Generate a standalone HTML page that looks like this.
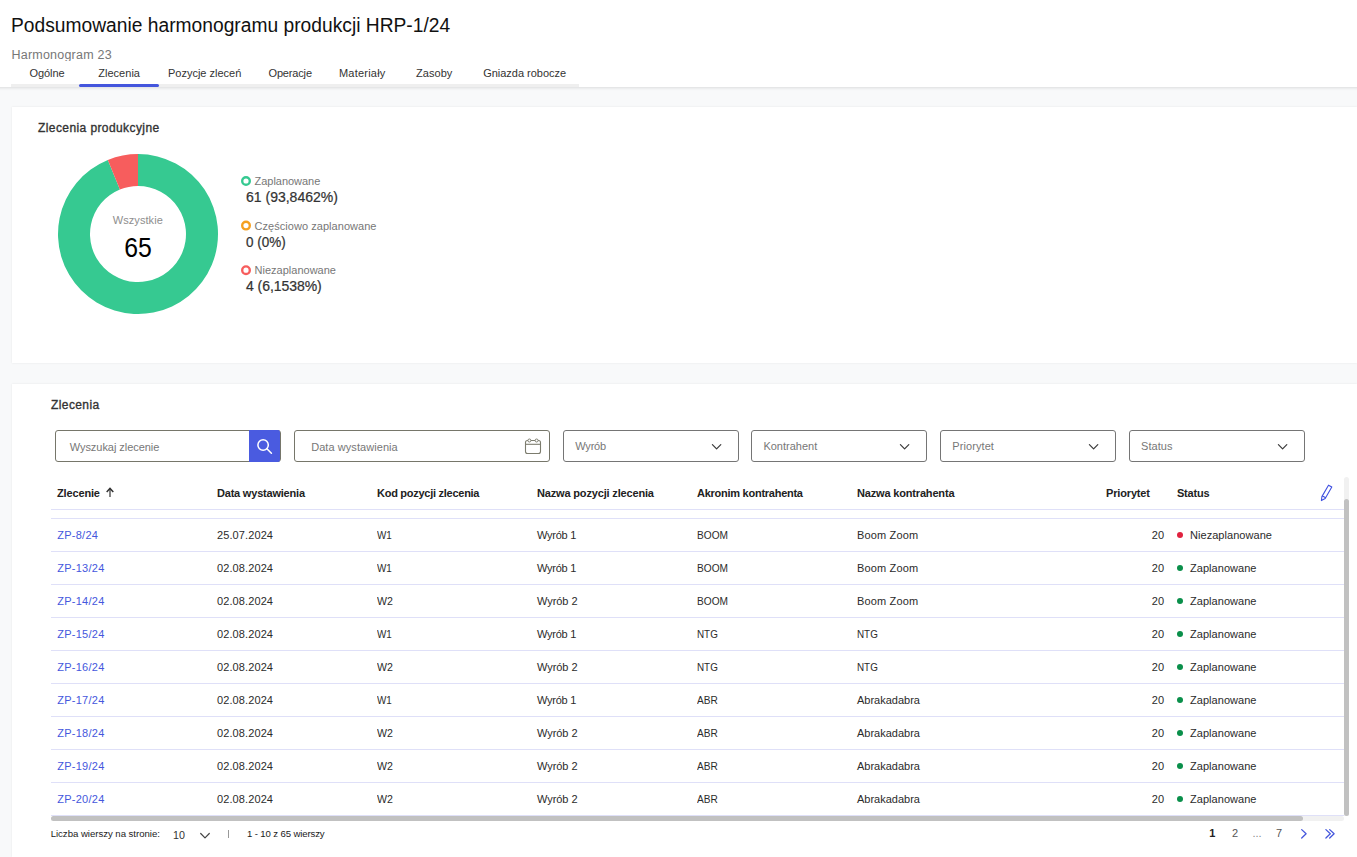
<!DOCTYPE html>
<html lang="pl"><head><meta charset="utf-8"><title>Podsumowanie harmonogramu produkcji HRP-1/24</title>
<style>
html,body{margin:0;padding:0}
body{width:1357px;height:857px;overflow:hidden;position:relative;background:#f8f9fa;font-family:"Liberation Sans",sans-serif;color:#222}
.t{position:absolute;white-space:nowrap;line-height:1;margin:0;padding:0}
.abs{position:absolute}
.hdr{left:-10px;top:0;width:1377px;height:87px;background:#fff;box-shadow:0 1px 3px rgba(0,0,0,.12)}
.card{background:#fff;box-shadow:0 0 2px rgba(0,0,0,.08)}
.inp{border:1px solid #76766a;border-radius:3px;background:#fff;box-sizing:border-box;height:32px;top:430px}
.sel{border-color:#757575}
.hl{left:51px;width:1293px;height:1px;background:#dfe0f8}
</style></head><body>
<div class="abs hdr"></div>
<div class="abs" style="left:0;top:44px;width:200px;height:17px;overflow:hidden"><span class="t" id="sub" style="left:11.5px;top:5px;font-size:12.5px;color:#777;letter-spacing:0.22px">Harmonogram 23</span></div>
<div class="abs" style="left:11px;top:84px;width:568px;height:3px;background:#efefef"></div>
<div class="abs" style="left:79px;top:84px;width:80px;height:3px;background:#4456dd;border-radius:2px"></div>
<div class="abs card" style="left:12px;top:107px;width:1345px;height:256px"></div>
<div class="abs card" style="left:12px;top:384px;width:1345px;height:473px"></div>
<svg class="abs" style="left:0;top:0" width="420" height="370" viewBox="0 0 420 370"><path d="M138.00 154.00A80 80 0 1 1 107.83 159.91L119.90 189.54A48 48 0 1 0 138.00 186.00Z" fill="#36c991"/><path d="M107.83 159.91A80 80 0 0 1 138.00 154.00L138.00 186.00A48 48 0 0 0 119.90 189.54Z" fill="#f75d5d"/><circle cx="246" cy="181" r="3.8" fill="#fff" stroke="#36c991" stroke-width="2.4"/><circle cx="246" cy="225.6" r="3.8" fill="#fff" stroke="#f5a020" stroke-width="2.4"/><circle cx="246" cy="270.2" r="3.8" fill="#fff" stroke="#f75d5d" stroke-width="2.4"/></svg>
<div class="abs inp" style="left:55px;width:226px"></div>
<div class="abs" style="left:249px;top:430px;width:31px;height:32px;background:#4a5be0;border-radius:0 2px 2px 0"></div>
<svg class="abs" style="left:249px;top:430px" width="32" height="32" viewBox="0 0 32 32"><circle cx="14.1" cy="15" r="5.2" fill="none" stroke="#fff" stroke-width="1.5"/><path d="M17.9 18.8L22.4 23.2" stroke="#fff" stroke-width="1.6" stroke-linecap="round"/></svg>
<div class="abs inp" style="left:294px;width:256px"></div>
<div class="abs inp sel" style="left:563px;width:176px"></div>
<svg class="abs" style="left:709.6px;top:441px" width="14" height="12" viewBox="0 0 14 12"><path d="M2.4 3.6L6.6 7.8L10.8 3.6" fill="none" stroke="#3a3a3a" stroke-width="1.2" stroke-linecap="round" stroke-linejoin="round"/></svg>
<div class="abs inp sel" style="left:751px;width:176px"></div>
<svg class="abs" style="left:897.6px;top:441px" width="14" height="12" viewBox="0 0 14 12"><path d="M2.4 3.6L6.6 7.8L10.8 3.6" fill="none" stroke="#3a3a3a" stroke-width="1.2" stroke-linecap="round" stroke-linejoin="round"/></svg>
<div class="abs inp sel" style="left:940px;width:176px"></div>
<svg class="abs" style="left:1086.6px;top:441px" width="14" height="12" viewBox="0 0 14 12"><path d="M2.4 3.6L6.6 7.8L10.8 3.6" fill="none" stroke="#3a3a3a" stroke-width="1.2" stroke-linecap="round" stroke-linejoin="round"/></svg>
<div class="abs inp sel" style="left:1129px;width:176px"></div>
<svg class="abs" style="left:1275.6px;top:441px" width="14" height="12" viewBox="0 0 14 12"><path d="M2.4 3.6L6.6 7.8L10.8 3.6" fill="none" stroke="#3a3a3a" stroke-width="1.2" stroke-linecap="round" stroke-linejoin="round"/></svg>
<svg class="abs" style="left:522.5px;top:436px" width="20" height="20" viewBox="0 0 20 20"><rect x="2.5" y="4.5" width="15" height="13" rx="2" fill="none" stroke="#7c7c6e" stroke-width="1.1"/><path d="M2.5 8.3H17.5" stroke="#7c7c6e" stroke-width="1.1"/><circle cx="6.4" cy="4.5" r="1.5" fill="#fff" stroke="#7c7c6e" stroke-width="1"/><circle cx="13.6" cy="4.5" r="1.5" fill="#fff" stroke="#7c7c6e" stroke-width="1"/></svg>
<svg class="abs" style="left:103.5px;top:486px" width="12" height="12" viewBox="0 0 12 12"><path d="M6 2.4V11" fill="none" stroke="#333" stroke-width="1.2"/><path d="M2.7 5.9L6 2.4L9.3 5.9" fill="none" stroke="#333" stroke-width="1.5"/></svg>
<svg class="abs" style="left:1317px;top:483px" width="18" height="20" viewBox="0 0 18 20"><path d="M11.5 2.2L14.8 4.1L8.2 15.6L4.4 17.6L4.9 13.6Z M5.2 12.8L8.6 14.8" fill="none" stroke="#3f50e0" stroke-width="1.1" stroke-linejoin="round"/></svg>
<div class="abs hl" style="top:509px"></div>
<div class="abs hl" style="top:518px"></div>
<div class="abs hl" style="top:551px"></div>
<div class="abs hl" style="top:584px"></div>
<div class="abs hl" style="top:617px"></div>
<div class="abs hl" style="top:650px"></div>
<div class="abs hl" style="top:683px"></div>
<div class="abs hl" style="top:716px"></div>
<div class="abs hl" style="top:749px"></div>
<div class="abs hl" style="top:782px"></div>
<div class="abs hl" style="top:815px"></div>
<div class="abs" style="left:1176.75px;top:531.75px;width:6.5px;height:6.5px;border-radius:50%;background:#e0223f"></div>
<div class="abs" style="left:1176.75px;top:564.75px;width:6.5px;height:6.5px;border-radius:50%;background:#0a8f4a"></div>
<div class="abs" style="left:1176.75px;top:597.75px;width:6.5px;height:6.5px;border-radius:50%;background:#0a8f4a"></div>
<div class="abs" style="left:1176.75px;top:630.75px;width:6.5px;height:6.5px;border-radius:50%;background:#0a8f4a"></div>
<div class="abs" style="left:1176.75px;top:663.75px;width:6.5px;height:6.5px;border-radius:50%;background:#0a8f4a"></div>
<div class="abs" style="left:1176.75px;top:696.75px;width:6.5px;height:6.5px;border-radius:50%;background:#0a8f4a"></div>
<div class="abs" style="left:1176.75px;top:729.75px;width:6.5px;height:6.5px;border-radius:50%;background:#0a8f4a"></div>
<div class="abs" style="left:1176.75px;top:762.75px;width:6.5px;height:6.5px;border-radius:50%;background:#0a8f4a"></div>
<div class="abs" style="left:1176.75px;top:795.75px;width:6.5px;height:6.5px;border-radius:50%;background:#0a8f4a"></div>
<div class="abs" style="left:1344px;top:477px;width:5px;height:339px;background:#f1f1f1;border-radius:2.5px"></div>
<div class="abs" style="left:1344px;top:499px;width:5px;height:317px;background:#c1c1c1;border-radius:2.5px"></div>
<div class="abs" style="left:51px;top:816px;width:1293px;height:5px;background:#f1f1f1;border-radius:2.5px"></div>
<div class="abs" style="left:51px;top:816px;width:1252px;height:5px;background:#c1c1c1;border-radius:2.5px"></div>
<svg class="abs" style="left:197.6px;top:829.6px" width="14" height="12" viewBox="0 0 14 12"><path d="M2.7 3.5L7 7.8L11.3 3.5" fill="none" stroke="#444" stroke-width="1.2" stroke-linecap="round" stroke-linejoin="round"/></svg>
<div class="abs" style="left:228px;top:830px;width:1px;height:8px;background:#999"></div>
<svg class="abs" style="left:1296px;top:826px" width="44" height="16" viewBox="0 0 44 16"><path d="M5.7 3.6L10.1 7.8L5.7 12M29.9 3.6L34.3 7.8L29.9 12M33.7 3.6L38.1 7.8L33.7 12" fill="none" stroke="#4557dd" stroke-width="1.3" stroke-linecap="round" stroke-linejoin="round"/></svg>
<span class="t" id="t0" style="top:15px;font-size:20px;color:#111;left:11.3px;transform:scaleX(0.9612);transform-origin:0 0;">Podsumowanie harmonogramu produkcji HRP-1/24</span>
<span class="t" id="t1" style="top:68px;font-size:11px;color:#333;letter-spacing:-0.057px;left:29.4px;">Ogólne</span>
<span class="t" id="t2" style="top:68px;font-size:11px;color:#333;letter-spacing:0.032px;left:98.2px;">Zlecenia</span>
<span class="t" id="t3" style="top:68px;font-size:11px;color:#333;letter-spacing:-0.006px;left:168px;">Pozycje zleceń</span>
<span class="t" id="t4" style="top:68px;font-size:11px;color:#333;letter-spacing:-0.163px;left:268.5px;">Operacje</span>
<span class="t" id="t5" style="top:68px;font-size:11px;color:#333;letter-spacing:0.209px;left:339px;">Materiały</span>
<span class="t" id="t6" style="top:68px;font-size:11px;color:#333;letter-spacing:0.044px;left:416px;">Zasoby</span>
<span class="t" id="t7" style="top:68px;font-size:11px;color:#333;letter-spacing:-0.019px;left:483.2px;">Gniazda robocze</span>
<span class="t" id="t8" style="top:122px;font-size:12px;color:#333;letter-spacing:0.410px;left:38px;-webkit-text-stroke:0.35px currentColor;">Zlecenia produkcyjne</span>
<span class="t" id="t9" style="top:176px;font-size:11px;color:#777;letter-spacing:-0.026px;left:254.5px;">Zaplanowane</span>
<span class="t" id="t10" style="top:190px;font-size:14px;color:#333;letter-spacing:0.005px;left:246px;-webkit-text-stroke:0.22px currentColor;">61 (93,8462%)</span>
<span class="t" id="t11" style="top:221px;font-size:11px;color:#777;letter-spacing:0.046px;left:254.5px;">Częściowo zaplanowane</span>
<span class="t" id="t12" style="top:235px;font-size:14px;color:#333;left:246px;transform:scaleX(0.9628);transform-origin:0 0;-webkit-text-stroke:0.22px currentColor;">0 (0%)</span>
<span class="t" id="t13" style="top:265px;font-size:11px;color:#777;letter-spacing:0.012px;left:254.5px;">Niezaplanowane</span>
<span class="t" id="t14" style="top:279px;font-size:14px;color:#333;letter-spacing:-0.058px;left:246px;-webkit-text-stroke:0.22px currentColor;">4 (6,1538%)</span>
<span class="t" id="t15" style="top:215px;font-size:11px;color:#8e8e8e;letter-spacing:0.062px;left:137.83px;transform:translateX(-50%);">Wszystkie</span>
<span class="t" id="t16" style="top:235px;font-size:27px;color:#000;left:138.2px;transform:translateX(-50%) scaleX(0.9186);">65</span>
<span class="t" id="t17" style="top:399px;font-size:12px;color:#333;letter-spacing:0.406px;left:51px;-webkit-text-stroke:0.35px currentColor;">Zlecenia</span>
<span class="t" id="t18" style="top:442px;font-size:11px;color:#777;letter-spacing:-0.043px;left:69.7px;">Wyszukaj zlecenie</span>
<span class="t" id="t19" style="top:442px;font-size:11px;color:#777;letter-spacing:0.060px;left:311.2px;">Data wystawienia</span>
<span class="t" id="t20" style="top:441px;font-size:11px;color:#777;letter-spacing:-0.172px;left:575.2px;">Wyrób</span>
<span class="t" id="t21" style="top:441px;font-size:11px;color:#777;letter-spacing:0.008px;left:763.4px;">Kontrahent</span>
<span class="t" id="t22" style="top:441px;font-size:11px;color:#777;letter-spacing:0.079px;left:952.3px;">Priorytet</span>
<span class="t" id="t23" style="top:441px;font-size:11px;color:#777;letter-spacing:0.042px;left:1141px;">Status</span>
<span class="t" id="t24" style="top:488px;font-size:11px;color:#222;font-weight:700;letter-spacing:-0.147px;left:57px;">Zlecenie</span>
<span class="t" id="t25" style="top:488px;font-size:11px;color:#222;font-weight:700;letter-spacing:-0.206px;left:217px;">Data wystawienia</span>
<span class="t" id="t26" style="top:488px;font-size:11px;color:#222;font-weight:700;letter-spacing:-0.268px;left:377px;">Kod pozycji zlecenia</span>
<span class="t" id="t27" style="top:488px;font-size:11px;color:#222;font-weight:700;letter-spacing:-0.164px;left:537px;">Nazwa pozycji zlecenia</span>
<span class="t" id="t28" style="top:488px;font-size:11px;color:#222;font-weight:700;letter-spacing:-0.258px;left:697px;">Akronim kontrahenta</span>
<span class="t" id="t29" style="top:488px;font-size:11px;color:#222;font-weight:700;letter-spacing:-0.172px;left:857px;">Nazwa kontrahenta</span>
<span class="t" id="t30" style="top:488px;font-size:11px;color:#222;font-weight:700;letter-spacing:-0.156px;right:207.16px;">Priorytet</span>
<span class="t" id="t31" style="top:488px;font-size:11px;color:#222;font-weight:700;letter-spacing:-0.225px;left:1177px;">Status</span>
<span class="t" id="t32" style="top:530px;font-size:11px;color:#4557dd;letter-spacing:0.260px;left:57.2px;">ZP-8/24</span>
<span class="t" id="t33" style="top:530px;font-size:11px;color:#2b2b2b;letter-spacing:0.104px;left:217px;">25.07.2024</span>
<span class="t" id="t34" style="top:530px;font-size:11px;color:#2b2b2b;left:377.2px;transform:scaleX(0.8970);transform-origin:0 0;">W1</span>
<span class="t" id="t35" style="top:530px;font-size:11px;color:#2b2b2b;letter-spacing:-0.243px;left:537px;">Wyrób 1</span>
<span class="t" id="t36" style="top:530px;font-size:11px;color:#2b2b2b;left:697.2px;transform:scaleX(0.9219);transform-origin:0 0;">BOOM</span>
<span class="t" id="t37" style="top:530px;font-size:11px;color:#2b2b2b;letter-spacing:0.160px;left:857px;">Boom Zoom</span>
<span class="t" id="t38" style="top:530px;font-size:11px;color:#2b2b2b;letter-spacing:0.050px;right:192.95px;">20</span>
<span class="t" id="t39" style="top:530px;font-size:11px;color:#2b2b2b;letter-spacing:0.050px;left:1190px;">Niezaplanowane</span>
<span class="t" id="t40" style="top:563px;font-size:11px;color:#4557dd;letter-spacing:0.264px;left:57.2px;">ZP-13/24</span>
<span class="t" id="t41" style="top:563px;font-size:11px;color:#2b2b2b;letter-spacing:0.104px;left:217px;">02.08.2024</span>
<span class="t" id="t42" style="top:563px;font-size:11px;color:#2b2b2b;left:377.2px;transform:scaleX(0.8970);transform-origin:0 0;">W1</span>
<span class="t" id="t43" style="top:563px;font-size:11px;color:#2b2b2b;letter-spacing:-0.243px;left:537px;">Wyrób 1</span>
<span class="t" id="t44" style="top:563px;font-size:11px;color:#2b2b2b;left:697.2px;transform:scaleX(0.9219);transform-origin:0 0;">BOOM</span>
<span class="t" id="t45" style="top:563px;font-size:11px;color:#2b2b2b;letter-spacing:0.160px;left:857px;">Boom Zoom</span>
<span class="t" id="t46" style="top:563px;font-size:11px;color:#2b2b2b;letter-spacing:0.050px;right:192.95px;">20</span>
<span class="t" id="t47" style="top:563px;font-size:11px;color:#2b2b2b;letter-spacing:0.044px;left:1190px;">Zaplanowane</span>
<span class="t" id="t48" style="top:596px;font-size:11px;color:#4557dd;letter-spacing:0.264px;left:57.2px;">ZP-14/24</span>
<span class="t" id="t49" style="top:596px;font-size:11px;color:#2b2b2b;letter-spacing:0.104px;left:217px;">02.08.2024</span>
<span class="t" id="t50" style="top:596px;font-size:11px;color:#2b2b2b;left:377.2px;transform:scaleX(0.9636);transform-origin:0 0;">W2</span>
<span class="t" id="t51" style="top:596px;font-size:11px;color:#2b2b2b;letter-spacing:-0.060px;left:537px;">Wyrób 2</span>
<span class="t" id="t52" style="top:596px;font-size:11px;color:#2b2b2b;left:697.2px;transform:scaleX(0.9219);transform-origin:0 0;">BOOM</span>
<span class="t" id="t53" style="top:596px;font-size:11px;color:#2b2b2b;letter-spacing:0.160px;left:857px;">Boom Zoom</span>
<span class="t" id="t54" style="top:596px;font-size:11px;color:#2b2b2b;letter-spacing:0.050px;right:192.95px;">20</span>
<span class="t" id="t55" style="top:596px;font-size:11px;color:#2b2b2b;letter-spacing:0.044px;left:1190px;">Zaplanowane</span>
<span class="t" id="t56" style="top:629px;font-size:11px;color:#4557dd;letter-spacing:0.264px;left:57.2px;">ZP-15/24</span>
<span class="t" id="t57" style="top:629px;font-size:11px;color:#2b2b2b;letter-spacing:0.104px;left:217px;">02.08.2024</span>
<span class="t" id="t58" style="top:629px;font-size:11px;color:#2b2b2b;left:377.2px;transform:scaleX(0.8970);transform-origin:0 0;">W1</span>
<span class="t" id="t59" style="top:629px;font-size:11px;color:#2b2b2b;letter-spacing:-0.243px;left:537px;">Wyrób 1</span>
<span class="t" id="t60" style="top:629px;font-size:11px;color:#2b2b2b;left:697.2px;transform:scaleX(0.8952);transform-origin:0 0;">NTG</span>
<span class="t" id="t61" style="top:629px;font-size:11px;color:#2b2b2b;left:857px;transform:scaleX(0.8952);transform-origin:0 0;">NTG</span>
<span class="t" id="t62" style="top:629px;font-size:11px;color:#2b2b2b;letter-spacing:0.050px;right:192.95px;">20</span>
<span class="t" id="t63" style="top:629px;font-size:11px;color:#2b2b2b;letter-spacing:0.044px;left:1190px;">Zaplanowane</span>
<span class="t" id="t64" style="top:662px;font-size:11px;color:#4557dd;letter-spacing:0.264px;left:57.2px;">ZP-16/24</span>
<span class="t" id="t65" style="top:662px;font-size:11px;color:#2b2b2b;letter-spacing:0.104px;left:217px;">02.08.2024</span>
<span class="t" id="t66" style="top:662px;font-size:11px;color:#2b2b2b;left:377.2px;transform:scaleX(0.9636);transform-origin:0 0;">W2</span>
<span class="t" id="t67" style="top:662px;font-size:11px;color:#2b2b2b;letter-spacing:-0.060px;left:537px;">Wyrób 2</span>
<span class="t" id="t68" style="top:662px;font-size:11px;color:#2b2b2b;left:697.2px;transform:scaleX(0.8952);transform-origin:0 0;">NTG</span>
<span class="t" id="t69" style="top:662px;font-size:11px;color:#2b2b2b;left:857px;transform:scaleX(0.8952);transform-origin:0 0;">NTG</span>
<span class="t" id="t70" style="top:662px;font-size:11px;color:#2b2b2b;letter-spacing:0.050px;right:192.95px;">20</span>
<span class="t" id="t71" style="top:662px;font-size:11px;color:#2b2b2b;letter-spacing:0.044px;left:1190px;">Zaplanowane</span>
<span class="t" id="t72" style="top:695px;font-size:11px;color:#4557dd;letter-spacing:0.264px;left:57.2px;">ZP-17/24</span>
<span class="t" id="t73" style="top:695px;font-size:11px;color:#2b2b2b;letter-spacing:0.104px;left:217px;">02.08.2024</span>
<span class="t" id="t74" style="top:695px;font-size:11px;color:#2b2b2b;left:377.2px;transform:scaleX(0.8970);transform-origin:0 0;">W1</span>
<span class="t" id="t75" style="top:695px;font-size:11px;color:#2b2b2b;letter-spacing:-0.243px;left:537px;">Wyrób 1</span>
<span class="t" id="t76" style="top:695px;font-size:11px;color:#2b2b2b;left:697.2px;transform:scaleX(0.9193);transform-origin:0 0;">ABR</span>
<span class="t" id="t77" style="top:695px;font-size:11px;color:#2b2b2b;left:857px;">Abrakadabra</span>
<span class="t" id="t78" style="top:695px;font-size:11px;color:#2b2b2b;letter-spacing:0.050px;right:192.95px;">20</span>
<span class="t" id="t79" style="top:695px;font-size:11px;color:#2b2b2b;letter-spacing:0.044px;left:1190px;">Zaplanowane</span>
<span class="t" id="t80" style="top:728px;font-size:11px;color:#4557dd;letter-spacing:0.264px;left:57.2px;">ZP-18/24</span>
<span class="t" id="t81" style="top:728px;font-size:11px;color:#2b2b2b;letter-spacing:0.104px;left:217px;">02.08.2024</span>
<span class="t" id="t82" style="top:728px;font-size:11px;color:#2b2b2b;left:377.2px;transform:scaleX(0.9636);transform-origin:0 0;">W2</span>
<span class="t" id="t83" style="top:728px;font-size:11px;color:#2b2b2b;letter-spacing:-0.060px;left:537px;">Wyrób 2</span>
<span class="t" id="t84" style="top:728px;font-size:11px;color:#2b2b2b;left:697.2px;transform:scaleX(0.9193);transform-origin:0 0;">ABR</span>
<span class="t" id="t85" style="top:728px;font-size:11px;color:#2b2b2b;left:857px;">Abrakadabra</span>
<span class="t" id="t86" style="top:728px;font-size:11px;color:#2b2b2b;letter-spacing:0.050px;right:192.95px;">20</span>
<span class="t" id="t87" style="top:728px;font-size:11px;color:#2b2b2b;letter-spacing:0.044px;left:1190px;">Zaplanowane</span>
<span class="t" id="t88" style="top:761px;font-size:11px;color:#4557dd;letter-spacing:0.264px;left:57.2px;">ZP-19/24</span>
<span class="t" id="t89" style="top:761px;font-size:11px;color:#2b2b2b;letter-spacing:0.104px;left:217px;">02.08.2024</span>
<span class="t" id="t90" style="top:761px;font-size:11px;color:#2b2b2b;left:377.2px;transform:scaleX(0.9636);transform-origin:0 0;">W2</span>
<span class="t" id="t91" style="top:761px;font-size:11px;color:#2b2b2b;letter-spacing:-0.060px;left:537px;">Wyrób 2</span>
<span class="t" id="t92" style="top:761px;font-size:11px;color:#2b2b2b;left:697.2px;transform:scaleX(0.9193);transform-origin:0 0;">ABR</span>
<span class="t" id="t93" style="top:761px;font-size:11px;color:#2b2b2b;left:857px;">Abrakadabra</span>
<span class="t" id="t94" style="top:761px;font-size:11px;color:#2b2b2b;letter-spacing:0.050px;right:192.95px;">20</span>
<span class="t" id="t95" style="top:761px;font-size:11px;color:#2b2b2b;letter-spacing:0.044px;left:1190px;">Zaplanowane</span>
<span class="t" id="t96" style="top:794px;font-size:11px;color:#4557dd;letter-spacing:0.264px;left:57.2px;">ZP-20/24</span>
<span class="t" id="t97" style="top:794px;font-size:11px;color:#2b2b2b;letter-spacing:0.104px;left:217px;">02.08.2024</span>
<span class="t" id="t98" style="top:794px;font-size:11px;color:#2b2b2b;left:377.2px;transform:scaleX(0.9636);transform-origin:0 0;">W2</span>
<span class="t" id="t99" style="top:794px;font-size:11px;color:#2b2b2b;letter-spacing:-0.060px;left:537px;">Wyrób 2</span>
<span class="t" id="t100" style="top:794px;font-size:11px;color:#2b2b2b;left:697.2px;transform:scaleX(0.9193);transform-origin:0 0;">ABR</span>
<span class="t" id="t101" style="top:794px;font-size:11px;color:#2b2b2b;left:857px;">Abrakadabra</span>
<span class="t" id="t102" style="top:794px;font-size:11px;color:#2b2b2b;letter-spacing:0.050px;right:192.95px;">20</span>
<span class="t" id="t103" style="top:794px;font-size:11px;color:#2b2b2b;letter-spacing:0.044px;left:1190px;">Zaplanowane</span>
<span class="t" id="t104" style="top:829px;font-size:9.6px;color:#222;letter-spacing:-0.026px;left:50.7px;">Liczba wierszy na stronie:</span>
<span class="t" id="t105" style="top:830px;font-size:11px;color:#333;left:173.2px;transform:scaleX(0.9714);transform-origin:0 0;">10</span>
<span class="t" id="t106" style="top:829px;font-size:9.6px;color:#222;letter-spacing:-0.132px;left:247px;">1 - 10 z 65 wierszy</span>
<span class="t" id="t107" style="top:828px;font-size:11px;color:#222;font-weight:700;left:1212.30px;transform:translateX(-50%);">1</span>
<span class="t" id="t108" style="top:828px;font-size:11px;color:#555;left:1235.00px;transform:translateX(-50%);">2</span>
<span class="t" id="t109" style="top:828px;font-size:11px;color:#888;left:1257.00px;transform:translateX(-50%);">...</span>
<span class="t" id="t110" style="top:828px;font-size:11px;color:#555;left:1279.00px;transform:translateX(-50%);">7</span>
</body></html>
